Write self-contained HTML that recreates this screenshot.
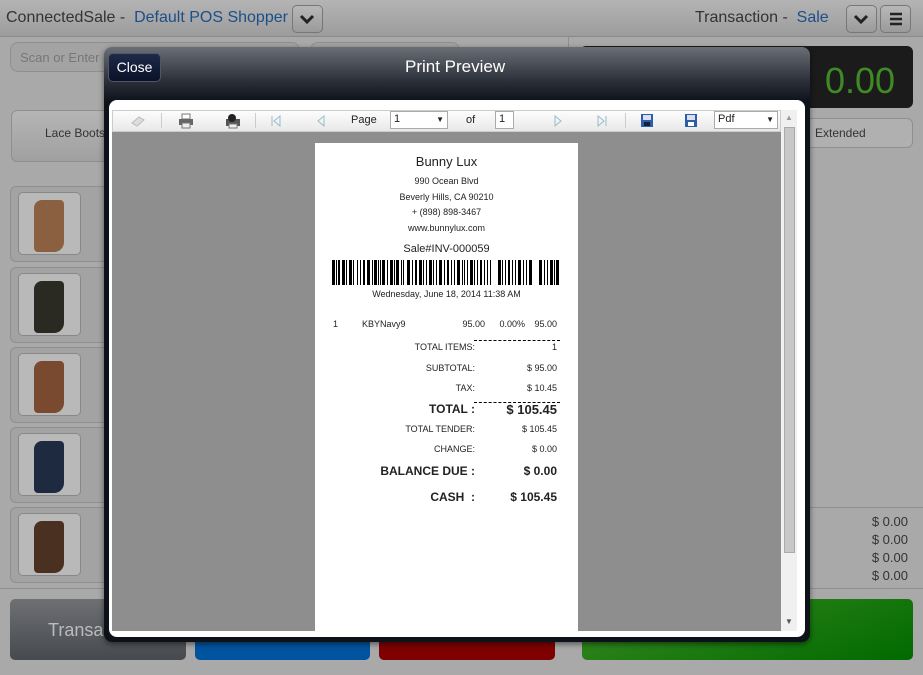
<!DOCTYPE html>
<html><head><meta charset="utf-8"><style>
*{box-sizing:border-box;margin:0;padding:0}
body{width:923px;height:675px;overflow:hidden;background:#a9a9a9;font-family:"Liberation Sans",sans-serif;position:relative}
.abs{position:absolute}
.hdr{left:0;top:0;width:923px;height:37px;background:linear-gradient(#b4b4b4,#9c9c9c);border-bottom:1px solid #8a8a8a}
.t{font-size:16px;color:#333;white-space:nowrap}
.b{color:#1c4f8a}
.sq{width:31px;height:28px;border:1px solid #777;border-radius:5px;background:linear-gradient(#b8b8b8,#9a9a9a)}
.card{border:1px solid #8f8f8f;border-radius:6px;background:#a3a3a3}
.img{left:18px;width:63px;height:63px;border:1px solid #888;border-radius:5px;background:#b9b9b9}
.r{font-size:13px;color:#333;text-align:right;width:60px}
.rc{font-family:"Liberation Sans",sans-serif;color:#222}
</style></head><body>
<div class="abs hdr"></div>
<div class="abs t" style="left:6px;top:9px">ConnectedSale - <span class="b">&nbsp;Default POS Shopper</span></div>
<div class="abs sq" style="left:292px;top:5px"><svg width="29" height="26"><path d="M8 10l6 6 6-6" stroke="#222" stroke-width="3" fill="none"/></svg></div>
<div class="abs t" style="left:695px;top:9px">Transaction - <span class="b">&nbsp;Sale</span></div>
<div class="abs sq" style="left:846px;top:5px"><svg width="29" height="26"><path d="M8 10l6 6 6-6" stroke="#222" stroke-width="3" fill="none"/></svg></div>
<div class="abs sq" style="left:880px;top:5px"><svg width="29" height="26"><path d="M9 8h12M9 13h12M9 18h12" stroke="#222" stroke-width="2.5"/></svg></div>
<div class="abs" style="left:568px;top:37px;width:1px;height:560px;background:#8f8f8f"></div>
<div class="abs card" style="left:10px;top:42px;width:290px;height:30px;border-radius:8px"></div>
<div class="abs" style="left:20px;top:50px;font-size:13px;color:#777">Scan or Enter</div>
<div class="abs card" style="left:310px;top:42px;width:150px;height:30px;border-radius:8px"></div>
<div class="abs" style="left:340px;top:50px;font-size:13px;color:#777">Customer Lookup</div>
<div class="abs" style="left:285px;top:79px;font-size:13px;color:#666">Gift Card</div>
<div class="abs" style="left:580px;top:46px;width:333px;height:62px;background:#1b1b1b;border-radius:6px"></div>
<div class="abs" style="left:600px;top:60px;font-size:32px;color:#2a5a2a">$</div>
<div class="abs" style="left:825px;top:60px;font-size:36px;color:#3f8a24">0.00</div>
<div class="abs card" style="left:11px;top:110px;width:100px;height:52px;background:linear-gradient(#b5b5b5,#a0a0a0)"></div>
<div class="abs" style="left:45px;top:126px;font-size:12px;color:#333">Lace Boots</div>
<div class="abs card" style="left:800px;top:118px;width:113px;height:30px;background:#b0b0b0"></div>
<div class="abs" style="left:815px;top:126px;font-size:12px;color:#333">Extended</div>
<div class="abs" style="left:568px;top:507px;width:355px;height:1px;background:#8f8f8f"></div>
<div class="abs r" style="left:848px;top:514px">$ 0.00</div>
<div class="abs r" style="left:848px;top:532px">$ 0.00</div>
<div class="abs r" style="left:848px;top:550px">$ 0.00</div>
<div class="abs r" style="left:848px;top:568px">$ 0.00</div>
<div class="abs card" style="left:10px;top:186px;width:100px;height:76px"></div><div class="abs img" style="top:192px"></div>
<div class="abs card" style="left:10px;top:267px;width:100px;height:76px"></div><div class="abs img" style="top:273px"></div>
<div class="abs card" style="left:10px;top:347px;width:100px;height:76px"></div><div class="abs img" style="top:353px"></div>
<div class="abs card" style="left:10px;top:427px;width:100px;height:76px"></div><div class="abs img" style="top:433px"></div>
<div class="abs card" style="left:10px;top:507px;width:100px;height:76px"></div><div class="abs img" style="top:513px"></div>
<div class="abs" style="left:34px;top:200px;width:30px;height:52px;background:#8a6040;border-radius:8px 4px 10px 4px"></div>
<div class="abs" style="left:34px;top:281px;width:30px;height:52px;background:#2a2a22;border-radius:8px 4px 10px 4px"></div>
<div class="abs" style="left:34px;top:361px;width:30px;height:52px;background:#7a4a30;border-radius:8px 4px 10px 4px"></div>
<div class="abs" style="left:34px;top:441px;width:30px;height:52px;background:#1e2a40;border-radius:8px 4px 10px 4px"></div>
<div class="abs" style="left:34px;top:521px;width:30px;height:52px;background:#4a3020;border-radius:8px 4px 10px 4px"></div>
<div class="abs" style="left:0;top:588px;width:923px;height:1px;background:#8f8f8f"></div>
<div class="abs" style="left:10px;top:599px;width:176px;height:61px;border-radius:5px;background:linear-gradient(#6e7074,#46494e)"></div>
<div class="abs" style="left:48px;top:620px;font-size:18px;color:#bbb">Transa</div>
<div class="abs" style="left:195px;top:620px;width:175px;height:40px;border-radius:5px;background:#00539f"></div>
<div class="abs" style="left:379px;top:620px;width:176px;height:40px;border-radius:5px;background:#7e0000"></div>
<div class="abs" style="left:582px;top:599px;width:331px;height:61px;border-radius:5px;background:linear-gradient(160deg,#3a8a22,#006a00)"></div>

<div class="abs" style="left:104px;top:47px;width:706px;height:595px;border-radius:8px;background:linear-gradient(#6a6e76 0,#2a2e38 35px,#0d1119 55px,#0d1119);box-shadow:0 2px 6px rgba(0,0,0,.5)"></div>
<div class="abs" style="left:108px;top:53px;width:53px;height:29px;border-radius:5px;background:linear-gradient(#1e2a48,#0a1228);border:1px solid #556;color:#fff;font-size:14px;text-align:center;line-height:27px">Close</div>
<div class="abs" style="left:405px;top:57px;font-size:17px;color:#fff">Print Preview</div>
<div class="abs" style="left:109px;top:100px;width:696px;height:537px;background:#fff;border-radius:8px"></div>
<div class="abs" style="left:112px;top:110px;width:669px;height:22px;background:linear-gradient(#fdfdfd,#e8e8e8);border:1px solid #ccc"></div>
<div class="abs" style="left:112px;top:110px;width:669px;height:22px;font-size:11px;color:#222">
 <svg class="abs" style="left:18px;top:4px" width="16" height="14"><path d="M2 9l7-6 5 3-7 6z" fill="#ddd" stroke="#bbb"/></svg>
 <div class="abs" style="left:49px;top:3px;width:1px;height:15px;background:#ccc"></div>
 <svg class="abs" style="left:66px;top:3px" width="16" height="16"><rect x="4" y="1" width="8" height="5" fill="#fff" stroke="#777"/><rect x="1" y="6" width="14" height="6" fill="#666"/><rect x="4" y="10" width="8" height="5" fill="#eee" stroke="#777"/></svg>
 <svg class="abs" style="left:113px;top:3px" width="16" height="16"><rect x="1" y="6" width="14" height="7" fill="#555"/><circle cx="7" cy="5" r="4" fill="#222"/><rect x="4" y="11" width="8" height="4" fill="#eee" stroke="#777"/></svg>
 <div class="abs" style="left:143px;top:3px;width:1px;height:15px;background:#ccc"></div>
 <svg class="abs" style="left:158px;top:5px" width="12" height="12"><path d="M2 1v10M10 1L4 6l6 5z" stroke="#9bc" fill="none"/></svg>
 <svg class="abs" style="left:203px;top:5px" width="12" height="12"><path d="M9 1L3 6l6 5z" stroke="#9bc" fill="none"/></svg>
 <span class="abs" style="left:239px;top:4px">Page</span>
 <div class="abs" style="left:278px;top:1px;width:58px;height:18px;border:1px solid #aaa;background:#fff;padding:1px 3px">1<span style="float:right;font-size:8px;margin-top:2px">▼</span></div>
 <span class="abs" style="left:354px;top:4px">of</span>
 <div class="abs" style="left:383px;top:1px;width:19px;height:18px;border:1px solid #aaa;background:#fff;padding:1px 3px">1</div>
 <svg class="abs" style="left:440px;top:5px" width="12" height="12"><path d="M3 1l6 5-6 5z" stroke="#9bc" fill="none"/></svg>
 <svg class="abs" style="left:484px;top:5px" width="12" height="12"><path d="M2 1l6 5-6 5zM10 1v10" stroke="#9bc" fill="none"/></svg>
 <div class="abs" style="left:513px;top:3px;width:1px;height:15px;background:#ccc"></div>
 <svg class="abs" style="left:528px;top:3px" width="14" height="15"><rect x="1" y="1" width="12" height="13" fill="#2b5ea8"/><rect x="3" y="2" width="8" height="5" fill="#dde"/><rect x="4" y="9" width="6" height="4" fill="#123"/></svg>
 <svg class="abs" style="left:572px;top:3px" width="14" height="15"><rect x="1" y="1" width="12" height="13" fill="#2b5ea8"/><rect x="3" y="2" width="8" height="5" fill="#dde"/><rect x="4" y="9" width="6" height="4" fill="#fff"/></svg>
 <div class="abs" style="left:602px;top:1px;width:64px;height:18px;border:1px solid #aaa;background:#fff;padding:1px 3px">Pdf<span style="float:right;font-size:8px;margin-top:2px">▼</span></div>
</div>
<div class="abs" style="left:781px;top:110px;width:16px;height:521px;background:#f0f0f0"></div>
<div class="abs" style="left:784px;top:127px;width:11px;height:426px;background:#c8c8c8;border:1px solid #aaa"></div>
<div class="abs" style="left:785px;top:113px;font-size:8px;color:#999">▲</div>
<div class="abs" style="left:785px;top:617px;font-size:8px;color:#555">▼</div>
<div class="abs" style="left:112px;top:132px;width:669px;height:499px;background:#8e8e8e"></div>
<div class="abs rc" style="left:315px;top:143px;width:263px;height:488px;background:#fff">
 <div class="abs" style="left:0;top:11px;width:263px;text-align:center;font-size:13px">Bunny Lux</div>
 <div class="abs" style="left:0;top:31px;width:263px;text-align:center;font-size:9px;line-height:15.5px">990 Ocean Blvd<br>Beverly Hills, CA 90210<br>+ (898) 898-3467<br>www.bunnylux.com</div>
 <div class="abs" style="left:0;top:100px;width:263px;text-align:center;font-size:11px">Sale#INV-000059</div>
 <svg class="abs" style="left:17px;top:117px" width="230" height="25"><g fill="#000">
 <rect x="0" width="3" height="25"/><rect x="4" width="1" height="25"/><rect x="6" width="2" height="25"/><rect x="10" width="3" height="25"/><rect x="14" width="1" height="25"/><rect x="17" width="3" height="25"/><rect x="21" width="1" height="25"/><rect x="25" width="1" height="25"/><rect x="28" width="1" height="25"/><rect x="31" width="2" height="25"/><rect x="35" width="3" height="25"/><rect x="40" width="1" height="25"/><rect x="42" width="3" height="25"/><rect x="46" width="1" height="25"/><rect x="48" width="1" height="25"/><rect x="50" width="3" height="25"/><rect x="55" width="1" height="25"/><rect x="58" width="3" height="25"/><rect x="62" width="1" height="25"/><rect x="64" width="3" height="25"/><rect x="69" width="1" height="25"/><rect x="71" width="1" height="25"/><rect x="75" width="3" height="25"/><rect x="80" width="1" height="25"/><rect x="83" width="2" height="25"/><rect x="87" width="3" height="25"/><rect x="91" width="1" height="25"/><rect x="94" width="1" height="25"/><rect x="97" width="3" height="25"/><rect x="101" width="1" height="25"/><rect x="104" width="1" height="25"/><rect x="107" width="3" height="25"/><rect x="112" width="1" height="25"/><rect x="115" width="2" height="25"/><rect x="119" width="1" height="25"/><rect x="122" width="1" height="25"/><rect x="125" width="3" height="25"/><rect x="130" width="1" height="25"/><rect x="132" width="1" height="25"/><rect x="135" width="1" height="25"/><rect x="138" width="3" height="25"/><rect x="142" width="1" height="25"/><rect x="145" width="1" height="25"/><rect x="148" width="2" height="25"/><rect x="152" width="1" height="25"/><rect x="155" width="1" height="25"/><rect x="158" width="1" height="25"/><rect x="166" width="3" height="25"/><rect x="170" width="1" height="25"/><rect x="173" width="1" height="25"/><rect x="176" width="2" height="25"/><rect x="180" width="1" height="25"/><rect x="183" width="1" height="25"/><rect x="186" width="3" height="25"/><rect x="191" width="1" height="25"/><rect x="194" width="1" height="25"/><rect x="197" width="3" height="25"/><rect x="207" width="3" height="25"/><rect x="212" width="1" height="25"/><rect x="215" width="1" height="25"/><rect x="218" width="3" height="25"/><rect x="222" width="1" height="25"/><rect x="224" width="3" height="25"/></g></svg>
 <div class="abs" style="left:0;top:146px;width:263px;text-align:center;font-size:9px">Wednesday, June 18, 2014 11:38 AM</div>
 <div class="abs" style="top:176px;left:18px;font-size:9px">1</div>
 <div class="abs" style="top:176px;left:47px;font-size:9px">KBYNavy9</div>
 <div class="abs" style="top:176px;left:120px;width:50px;text-align:right;font-size:9px">95.00</div>
 <div class="abs" style="top:176px;left:160px;width:50px;text-align:right;font-size:9px">0.00%</div>
 <div class="abs" style="top:176px;left:192px;width:50px;text-align:right;font-size:9px">95.00</div>
 <div class="abs" style="top:197px;left:159px;width:86px;border-top:1px dashed #000"></div>
 <div class="abs" style="top:259px;left:159px;width:86px;border-top:1px dashed #000"></div>
 <div style="position:absolute;left:0;top:0;font-size:9px">
  <div class="abs" style="top:199px;left:60px;width:100px;text-align:right">TOTAL ITEMS:</div><div class="abs" style="top:199px;left:162px;width:80px;text-align:right">1</div>
  <div class="abs" style="top:220px;left:60px;width:100px;text-align:right">SUBTOTAL:</div><div class="abs" style="top:220px;left:162px;width:80px;text-align:right">$ 95.00</div>
  <div class="abs" style="top:240px;left:60px;width:100px;text-align:right">TAX:</div><div class="abs" style="top:240px;left:162px;width:80px;text-align:right">$ 10.45</div>
  <div class="abs" style="top:259px;left:40px;width:120px;text-align:right;font-size:12px;font-weight:bold">TOTAL :</div><div class="abs" style="top:259px;left:142px;width:100px;text-align:right;font-size:13px;font-weight:bold">$ 105.45</div>
  <div class="abs" style="top:281px;left:40px;width:120px;text-align:right">TOTAL TENDER:</div><div class="abs" style="top:281px;left:162px;width:80px;text-align:right">$ 105.45</div>
  <div class="abs" style="top:301px;left:60px;width:100px;text-align:right">CHANGE:</div><div class="abs" style="top:301px;left:162px;width:80px;text-align:right">$ 0.00</div>
  <div class="abs" style="top:321px;left:30px;width:130px;text-align:right;font-size:12px;font-weight:bold">BALANCE DUE :</div><div class="abs" style="top:321px;left:142px;width:100px;text-align:right;font-size:12px;font-weight:bold">$ 0.00</div>
  <div class="abs" style="top:347px;left:30px;width:130px;text-align:right;font-size:12px;font-weight:bold">CASH &nbsp;:</div><div class="abs" style="top:347px;left:142px;width:100px;text-align:right;font-size:12px;font-weight:bold">$ 105.45</div>
 </div>
</div>
</body></html>
